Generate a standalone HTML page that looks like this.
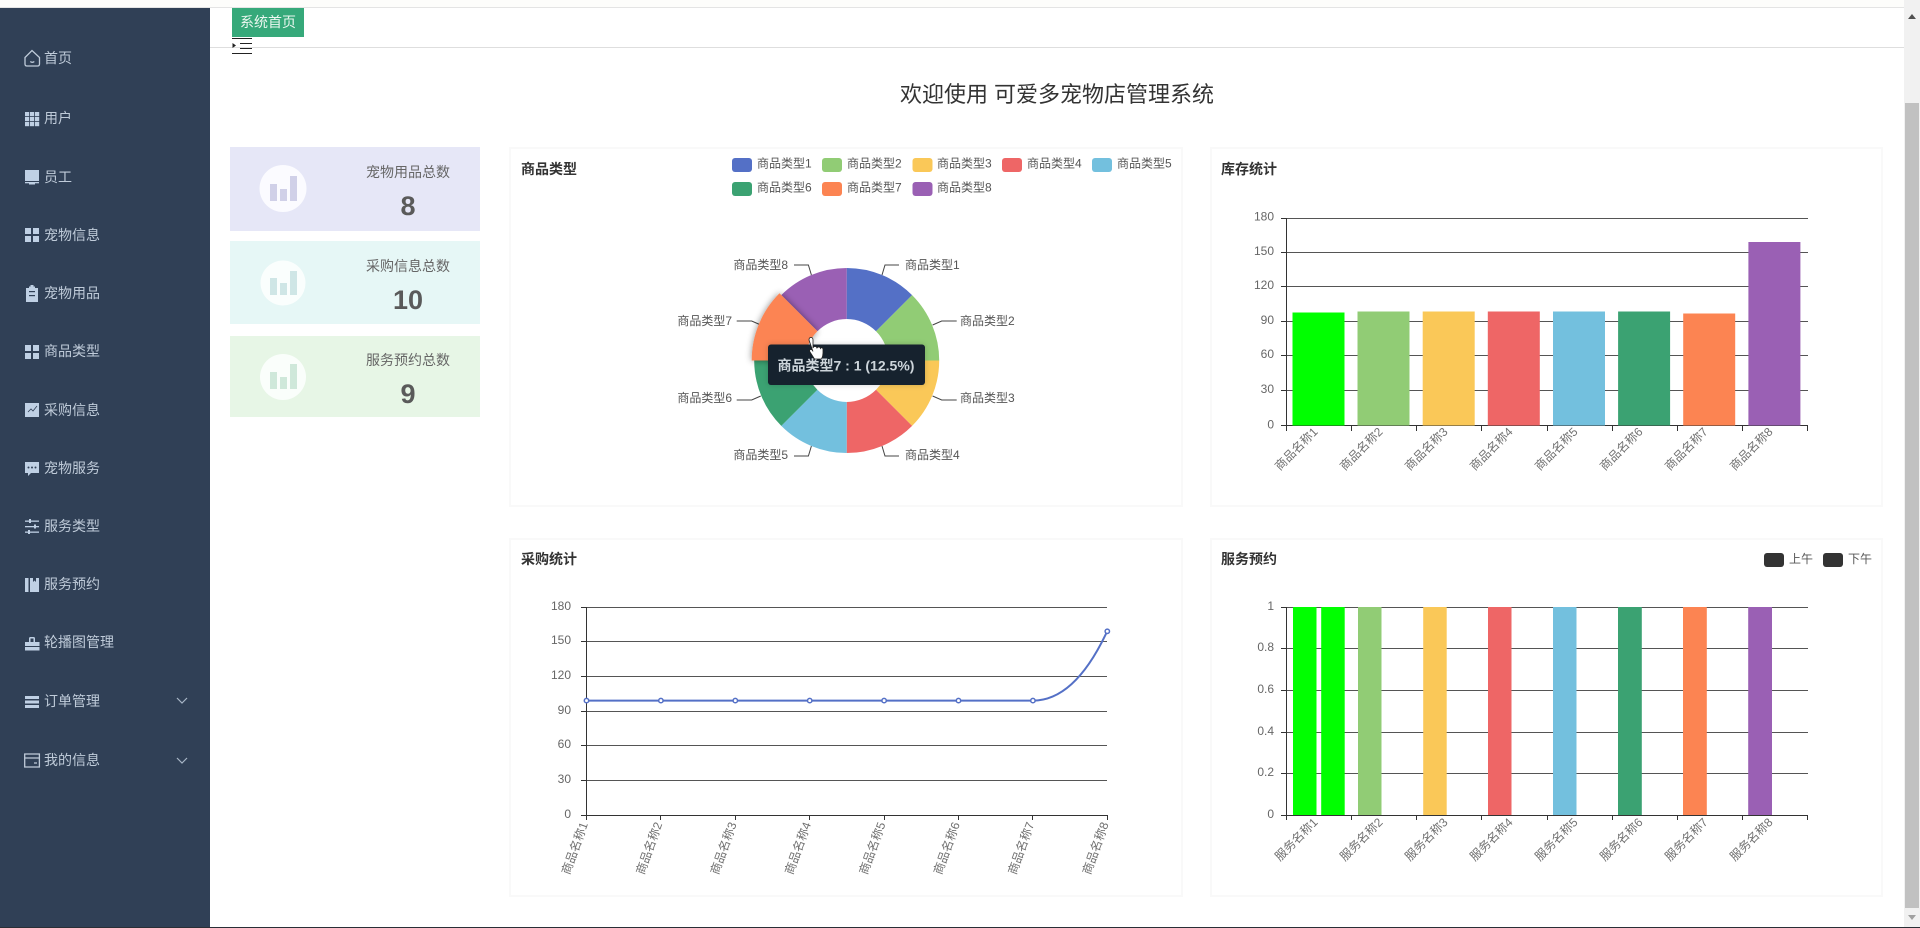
<!DOCTYPE html>
<html lang="zh-CN">
<head>
<meta charset="utf-8">
<title>可爱多宠物店管理系统</title>
<style>
html,body{margin:0;padding:0;width:1920px;height:928px;overflow:hidden;background:#fff}
svg{display:block;position:absolute;left:0;top:0}
text{font-family:"Liberation Sans","Noto Sans CJK SC",sans-serif}
.nav text{font-size:14px;fill:#bfcbd9}
.ic{fill:#bfd0e4}
.ol{fill:none;stroke:#bfcbd9;stroke-width:1.3}
.t{font-size:14px;font-weight:bold;fill:#333}
.s{font-size:14px;fill:#666;text-anchor:middle}
.n{font-size:27px;font-weight:bold;fill:#5a5a5a;text-anchor:middle}
.lg{font-size:12px;fill:#555}
.yl{font-size:12px;fill:#666;text-anchor:end}
.xl{font-size:12px;fill:#707070;text-anchor:end}
.pl{font-size:12px;fill:#555}
.g{stroke:#555;stroke-width:1;shape-rendering:crispEdges;fill:none}
.a{stroke:#333;stroke-width:1;shape-rendering:crispEdges;fill:none}
.card{fill:#fff;stroke:#f9f9f9;stroke-width:2}
</style>
</head>
<body>
<svg width="1920" height="928" viewBox="0 0 1920 928" xmlns="http://www.w3.org/2000/svg">
<defs>
<filter id="sh" x="-30%" y="-30%" width="160%" height="160%"><feDropShadow dx="0" dy="0" stdDeviation="3.5" flood-color="#000" flood-opacity=".45"/></filter>
<filter id="glow" x="-10%" y="-20%" width="120%" height="140%"><feDropShadow dx="0" dy="0" stdDeviation="3" flood-color="#000" flood-opacity=".18"/></filter>
</defs>

<!-- page -->
<rect x="0" y="0" width="1920" height="928" fill="#fff"/>
<rect x="0" y="0" width="1920" height="7" fill="#fdfdfb"/>
<rect x="0" y="7" width="1904" height="1" fill="#e4e4e4"/>

<!-- sidebar -->
<rect x="0" y="8" width="210" height="919" fill="#304056"/>
<g class="nav">
<text x="44" y="63">首页</text>
<text x="44" y="123">用户</text>
<text x="44" y="182">员工</text>
<text x="44" y="240">宠物信息</text>
<text x="44" y="298">宠物用品</text>
<text x="44" y="356">商品类型</text>
<text x="44" y="415">采购信息</text>
<text x="44" y="473">宠物服务</text>
<text x="44" y="531">服务类型</text>
<text x="44" y="589">服务预约</text>
<text x="44" y="647">轮播图管理</text>
<text x="44" y="706">订单管理</text>
<text x="44" y="765">我的信息</text>
</g>
<!-- icons -->
<path class="ol" d="M25 57.5 32 50.5 39.5 57.5V64q0 2-2 2H27q-2 0-2-2Z"/>
<path class="ol" d="M30.3 61.5q2 1.6 4 0"/>
<g class="ic">
<rect x="25" y="112" width="4.2" height="4.2"/><rect x="30" y="112" width="4.2" height="4.2"/><rect x="35" y="112" width="4.2" height="4.2"/>
<rect x="25" y="117" width="4.2" height="4.2"/><rect x="30" y="117" width="4.2" height="4.2"/><rect x="35" y="117" width="4.2" height="4.2"/>
<rect x="25" y="122" width="4.2" height="4.2"/><rect x="30" y="122" width="4.2" height="4.2"/><rect x="35" y="122" width="4.2" height="4.2"/>
<rect x="25" y="170" width="14" height="11"/><rect x="25" y="182" width="14" height="1.3"/><rect x="29" y="183" width="6" height="1.5"/>
<rect x="25" y="228" width="6" height="6"/><rect x="33" y="228" width="6" height="6"/><rect x="25" y="236" width="6" height="6"/><rect x="33" y="236" width="6" height="6"/>
<path d="M26 288h3v-1.5h1.5V285h3v1.5H35V288h3v14H26Z"/>
<rect x="25" y="345" width="6" height="6"/><rect x="33" y="345" width="6" height="6"/><rect x="25" y="353" width="6" height="6"/><rect x="33" y="353" width="6" height="6"/>
<rect x="25" y="403" width="14" height="14"/>
<path d="M25 462h14v11h-8l-3 3v-3h-3Z"/>
<rect x="25" y="520.5" width="14" height="1.3"/><rect x="25" y="526" width="14" height="1.3"/><rect x="25" y="531.5" width="14" height="1.3"/>
<rect x="29" y="519" width="2" height="4"/><rect x="34" y="524.5" width="2" height="4"/><rect x="28" y="530" width="2" height="4"/>
<rect x="25" y="578" width="3.5" height="14"/><path d="M30 578h3v4l1.5-1.5L36 582v-4h3v14h-9Z"/>
<path d="M25 642h4v-3.5q0-1.5 1.5-1.5h3q1.5 0 1.5 1.5V642h4.5v4H25Zm5.5 0h3v-3.5h-3ZM25 647h14.500v3.500H25Z"/>
<rect x="25" y="696" width="14" height="3"/><rect x="25" y="700.500" width="14" height="3"/><rect x="25" y="705" width="14" height="3"/>
</g>
<path d="M28 412l3-3 2 2 4-5" fill="none" stroke="#304056" stroke-width=".8"/>
<g fill="#304056"><circle cx="28.500" cy="467.500" r="1"/><circle cx="32" cy="467.500" r="1"/><circle cx="35.500" cy="467.500" r="1"/>
<rect x="29" y="291" width="6" height="1.200"/><rect x="29" y="295" width="6" height="1.200"/></g>
<path class="ol" d="M24.700 754H39.400V767H24.700ZM24.700 758H39.400M34 763h3"/>
<path d="M177 698 182 703 187 698" fill="none" stroke="#a8b6c6" stroke-width="1.200"/>
<path d="M177 758 182 763 187 758" fill="none" stroke="#a8b6c6" stroke-width="1.200"/>

<!-- header -->
<rect x="210" y="47" width="1694" height="1" fill="#dedede"/>
<rect x="232" y="8" width="72" height="29" fill="#36a97a"/>
<text x="268" y="27" font-size="14" fill="#ecf7f0" text-anchor="middle">系统首页</text>
<g fill="#222">
<rect x="232" y="38" width="20" height="1"/><rect x="240" y="43" width="12" height="1"/><rect x="240" y="48" width="12" height="1"/><rect x="232" y="53" width="20" height="1"/>
<path d="M232.500 43 236 45.500 232.500 48Z"/>
</g>

<!-- page title -->
<text x="1057" y="102" font-size="22" fill="#333" text-anchor="middle">欢迎使用 可爱多宠物店管理系统</text>

<!-- stat cards -->
<rect x="230" y="147" width="250" height="84" fill="#e6e7f7"/>
<circle cx="283" cy="188.500" r="23.500" fill="#fbfbff"/>
<g fill="#d0d0e8"><rect x="270" y="184" width="7" height="17"/><rect x="280" y="189" width="7" height="12"/><rect x="290" y="176" width="7" height="25"/></g>
<text class="s" x="408" y="177">宠物用品总数</text>
<text class="n" x="408" y="215">8</text>

<rect x="230" y="241" width="250" height="83" fill="#e6f7f6"/>
<circle cx="283" cy="283" r="22.500" fill="#fafefd"/>
<g fill="#cfe6e6"><rect x="270" y="278" width="7" height="17"/><rect x="280" y="283" width="7" height="12"/><rect x="290" y="271" width="7" height="24"/></g>
<text class="s" x="408" y="271">采购信息总数</text>
<text class="n" x="408" y="309">10</text>

<rect x="230" y="336" width="250" height="81" fill="#e7f6e6"/>
<circle cx="283" cy="377" r="23" fill="#fafefb"/>
<g fill="#cfe8da"><rect x="270" y="372" width="7" height="17"/><rect x="280" y="377" width="7" height="12"/><rect x="290" y="364" width="7" height="25"/></g>
<text class="s" x="408" y="365">服务预约总数</text>
<text class="n" x="408" y="403">9</text>

<!-- cards -->
<rect class="card" x="510" y="148" width="672" height="358"/>
<rect class="card" x="1211" y="148" width="671" height="358"/>
<rect class="card" x="510" y="539" width="672" height="357"/>
<rect class="card" x="1211" y="539" width="671" height="357"/>

<!-- card 1: pie -->
<text class="t" x="521" y="174">商品类型</text>
<g class="lg">
<rect x="732" y="158" width="20" height="14" rx="3" fill="#5470c6"/><text x="757" y="167.500">商品类型1</text>
<rect x="822" y="158" width="20" height="14" rx="3" fill="#91cc75"/><text x="847" y="167.500">商品类型2</text>
<rect x="912.500" y="158" width="20" height="14" rx="3" fill="#fac858"/><text x="937" y="167.500">商品类型3</text>
<rect x="1002" y="158" width="20" height="14" rx="3" fill="#ee6666"/><text x="1027" y="167.500">商品类型4</text>
<rect x="1092" y="158" width="20" height="14" rx="3" fill="#73c0de"/><text x="1117" y="167.500">商品类型5</text>
<rect x="732" y="182" width="20" height="14" rx="3" fill="#3ba272"/><text x="757" y="191.500">商品类型6</text>
<rect x="822" y="182" width="20" height="14" rx="3" fill="#fc8452"/><text x="847" y="191.500">商品类型7</text>
<rect x="912.500" y="182" width="20" height="14" rx="3" fill="#9a60b4"/><text x="937" y="191.500">商品类型8</text>
</g>
<g fill="none" stroke="#444" stroke-width="1">
<path d="M882 275 885 265H899"/><path d="M932.600 325 941.700 321H956.700"/><path d="M932.600 396 941.700 400H956.700"/><path d="M882 446 885 456H899"/>
<path d="M811.400 446 808.400 456H794"/><path d="M760.800 396 751.700 400H736.700"/><path d="M760.800 325 751.700 321H736.700"/><path d="M811.400 275 808.400 265H794"/>
</g>
<g class="pl">
<text x="905" y="269">商品类型1</text>
<text x="960" y="325">商品类型2</text>
<text x="960" y="402">商品类型3</text>
<text x="905" y="459">商品类型4</text>
<text x="788" y="459" text-anchor="end">商品类型5</text>
<text x="732" y="402" text-anchor="end">商品类型6</text>
<text x="732" y="325" text-anchor="end">商品类型7</text>
<text x="788" y="269" text-anchor="end">商品类型8</text>
</g>
<path d="M846.700 268A92.500 92.500 0 0 1 912.100 295.100L876 331.200A41.500 41.500 0 0 0 846.700 319Z" fill="#5470c6"/>
<path d="M912.100 295.100A92.500 92.500 0 0 1 939.200 360.500H888.200A41.500 41.500 0 0 0 876 331.200Z" fill="#91cc75"/>
<path d="M939.200 360.500A92.500 92.500 0 0 1 912.100 425.900L876 389.800A41.500 41.500 0 0 0 888.200 360.500Z" fill="#fac858"/>
<path d="M912.100 425.900A92.500 92.500 0 0 1 846.700 453V402A41.500 41.500 0 0 0 876 389.800Z" fill="#ee6666"/>
<path d="M846.700 453A92.500 92.500 0 0 1 781.300 425.900L817.400 389.800A41.500 41.500 0 0 0 846.700 402Z" fill="#73c0de"/>
<path d="M781.300 425.900A92.500 92.500 0 0 1 754.200 360.500H805.200A41.500 41.500 0 0 0 817.400 389.800Z" fill="#3ba272"/>
<path d="M781.300 295.100A92.500 92.500 0 0 1 846.700 268V319A41.500 41.500 0 0 0 817.400 331.200Z" fill="#9a60b4"/>
<path d="M751.700 360.500A95 95 0 0 1 779.500 293.300L817.400 331.200A41.500 41.500 0 0 0 805.200 360.500Z" fill="#fc8452" filter="url(#sh)"/>
<rect x="768" y="344.500" width="157" height="40.500" rx="3" fill="#13202e" filter="url(#glow)"/>
<text x="777.500" y="370.500" font-size="14" font-weight="bold" fill="#cdd5db">商品类型7 : 1 (12.5%)</text>
<!-- cursor -->
<path d="M809 340q0-2.500 2-2.500t2 2.500v8q.5-1.500 2-1.500t2 1.500q.5-1 1.800-1t1.700 1.500q.5-.8 1.300-.8t1.200 1.500V353q0 3-1.500 6h-7l-4.500-7q-1-2 .5-2.500t2.500 2Z" fill="#fff" stroke="#222" stroke-width=".8"/>

<!-- card 2: stock -->
<text class="t" x="1221" y="174">库存统计</text>
<g class="g">
<path d="M1286 218.500H1808M1286 252.500H1808M1286 286.500H1808M1286 321.500H1808M1286 355.500H1808M1286 390.500H1808"/>
</g>
<g class="a">
<path d="M1286.500 218V426M1281 218.500H1286M1281 252.500H1286M1281 286.500H1286M1281 321.500H1286M1281 355.500H1286M1281 390.500H1286M1281 425.500H1808"/>
<path d="M1286.500 425V431M1351.500 425V431M1416.500 425V431M1481.500 425V431M1547.500 425V431M1612.500 425V431M1677.500 425V431M1742.500 425V431M1807.500 425V431"/>
</g>
<rect x="1292.500" y="312.500" width="52" height="113" fill="#00ff00"/>
<rect x="1357.500" y="311.500" width="52" height="114" fill="#91cc75"/>
<rect x="1422.700" y="311.500" width="52" height="114" fill="#fac858"/>
<rect x="1487.800" y="311.500" width="52" height="114" fill="#ee6666"/>
<rect x="1553" y="311.500" width="52" height="114" fill="#73c0de"/>
<rect x="1618.100" y="311.500" width="52" height="114" fill="#3ba272"/>
<rect x="1683.200" y="313.500" width="52" height="112" fill="#fc8452"/>
<rect x="1748.400" y="242" width="52" height="183.500" fill="#9a60b4"/>
<g class="yl">
<text x="1274" y="220.500">180</text><text x="1274" y="255">150</text><text x="1274" y="289">120</text><text x="1274" y="324">90</text><text x="1274" y="358">60</text><text x="1274" y="393">30</text><text x="1274" y="428.500">0</text>
</g>
<g class="xl">
<text transform="translate(1318.500,432.500) rotate(-45)">商品名称1</text>
<text transform="translate(1383.500,432.500) rotate(-45)">商品名称2</text>
<text transform="translate(1448.500,432.500) rotate(-45)">商品名称3</text>
<text transform="translate(1513.500,432.500) rotate(-45)">商品名称4</text>
<text transform="translate(1578.500,432.500) rotate(-45)">商品名称5</text>
<text transform="translate(1643.500,432.500) rotate(-45)">商品名称6</text>
<text transform="translate(1708.500,432.500) rotate(-45)">商品名称7</text>
<text transform="translate(1773.500,432.500) rotate(-45)">商品名称8</text>
</g>

<!-- card 3: line -->
<text class="t" x="521" y="564">采购统计</text>
<g transform="translate(0,-1)">
<g class="g"><path d="M586 608.500H1107M586 642.500H1107M586 677.500H1107M586 712.500H1107M586 746.500H1107M586 781.500H1107"/></g>
<g class="a">
<path d="M586.500 608V816M581 608.500H586M581 642.500H586M581 677.500H586M581 712.500H586M581 746.500H586M581 781.500H586M581 816.500H1108"/>
<path d="M586.500 816V821M660.500 816V821M735.500 816V821M809.500 816V821M884.500 816V821M958.500 816V821M1032.500 816V821M1107.500 816V821"/>
</g>
<path d="M586.500 701.600H1032.900C1060 701.600 1085 680 1107.300 632" fill="none" stroke="#5470c6" stroke-width="2"/>
<g fill="#fff" stroke="#5470c6" stroke-width="1.500">
<circle cx="586.500" cy="701.600" r="2.200"/><circle cx="660.900" cy="701.600" r="2.200"/><circle cx="735.300" cy="701.600" r="2.200"/><circle cx="809.700" cy="701.600" r="2.200"/><circle cx="884.100" cy="701.600" r="2.200"/><circle cx="958.500" cy="701.600" r="2.200"/><circle cx="1032.900" cy="701.600" r="2.200"/><circle cx="1107.300" cy="632.300" r="2.200"/>
</g>
<g class="yl">
<text x="571" y="611">180</text><text x="571" y="645">150</text><text x="571" y="680">120</text><text x="571" y="715">90</text><text x="571" y="749">60</text><text x="571" y="784">30</text><text x="571" y="819">0</text>
</g>
<g class="xl">
<text transform="translate(588,825) rotate(-70)">商品名称1</text>
<text transform="translate(662.400,825) rotate(-70)">商品名称2</text>
<text transform="translate(736.800,825) rotate(-70)">商品名称3</text>
<text transform="translate(811.200,825) rotate(-70)">商品名称4</text>
<text transform="translate(885.600,825) rotate(-70)">商品名称5</text>
<text transform="translate(960,825) rotate(-70)">商品名称6</text>
<text transform="translate(1034.400,825) rotate(-70)">商品名称7</text>
<text transform="translate(1108.800,825) rotate(-70)">商品名称8</text>
</g>
</g>

<!-- card 4: service -->
<text class="t" x="1221" y="564">服务预约</text>
<rect x="1764" y="553" width="20" height="14" rx="3" fill="#333"/><text class="lg" x="1789" y="563">上午</text>
<rect x="1823" y="553" width="20" height="14" rx="3" fill="#333"/><text class="lg" x="1848" y="563">下午</text>
<g transform="translate(0,-1)">
<g class="g"><path d="M1286 608.500H1808M1286 649.500H1808M1286 691.500H1808M1286 733.500H1808M1286 774.500H1808"/></g>
<g class="a">
<path d="M1286.500 608V816M1281 608.500H1286M1281 649.500H1286M1281 691.500H1286M1281 733.500H1286M1281 774.500H1286M1281 816.500H1808"/>
<path d="M1286.500 816V821M1351.500 816V821M1416.500 816V821M1481.500 816V821M1547.500 816V821M1612.500 816V821M1677.500 816V821M1742.500 816V821M1807.500 816V821"/>
</g>
<rect x="1293" y="608" width="23.500" height="208" fill="#00ff00"/>
<rect x="1321.200" y="608" width="23.500" height="208" fill="#00ff00"/>
<rect x="1358" y="608" width="23.500" height="208" fill="#91cc75"/>
<rect x="1423.200" y="608" width="23.500" height="208" fill="#fac858"/>
<rect x="1488" y="608" width="23.500" height="208" fill="#ee6666"/>
<rect x="1553" y="608" width="23.500" height="208" fill="#73c0de"/>
<rect x="1618" y="608" width="23.800" height="208" fill="#3ba272"/>
<rect x="1683" y="608" width="23.800" height="208" fill="#fc8452"/>
<rect x="1748.200" y="608" width="23.800" height="208" fill="#9a60b4"/>
<g class="yl">
<text x="1274" y="611">1</text><text x="1274" y="652">0.8</text><text x="1274" y="694">0.6</text><text x="1274" y="736">0.4</text><text x="1274" y="777">0.2</text><text x="1274" y="819">0</text>
</g>
<g class="xl">
<text transform="translate(1318.500,824) rotate(-45)">服务名称1</text>
<text transform="translate(1383.500,824) rotate(-45)">服务名称2</text>
<text transform="translate(1448.500,824) rotate(-45)">服务名称3</text>
<text transform="translate(1513.500,824) rotate(-45)">服务名称4</text>
<text transform="translate(1578.500,824) rotate(-45)">服务名称5</text>
<text transform="translate(1643.500,824) rotate(-45)">服务名称6</text>
<text transform="translate(1708.500,824) rotate(-45)">服务名称7</text>
<text transform="translate(1773.500,824) rotate(-45)">服务名称8</text>
</g>
</g>

<!-- scrollbar -->
<rect x="1904" y="0" width="16" height="927" fill="#f1f1f1"/>
<rect x="1905" y="103" width="14" height="805" fill="#c1c1c1"/>
<path d="M1908 19 1912 14 1916 19Z" fill="#505050"/>
<path d="M1908 915 1912 920 1916 915Z" fill="#a0a0a0"/>

<!-- bottom line -->
<rect x="0" y="927" width="1920" height="1" fill="#2a2f36"/>
</svg>
</body>
</html>
